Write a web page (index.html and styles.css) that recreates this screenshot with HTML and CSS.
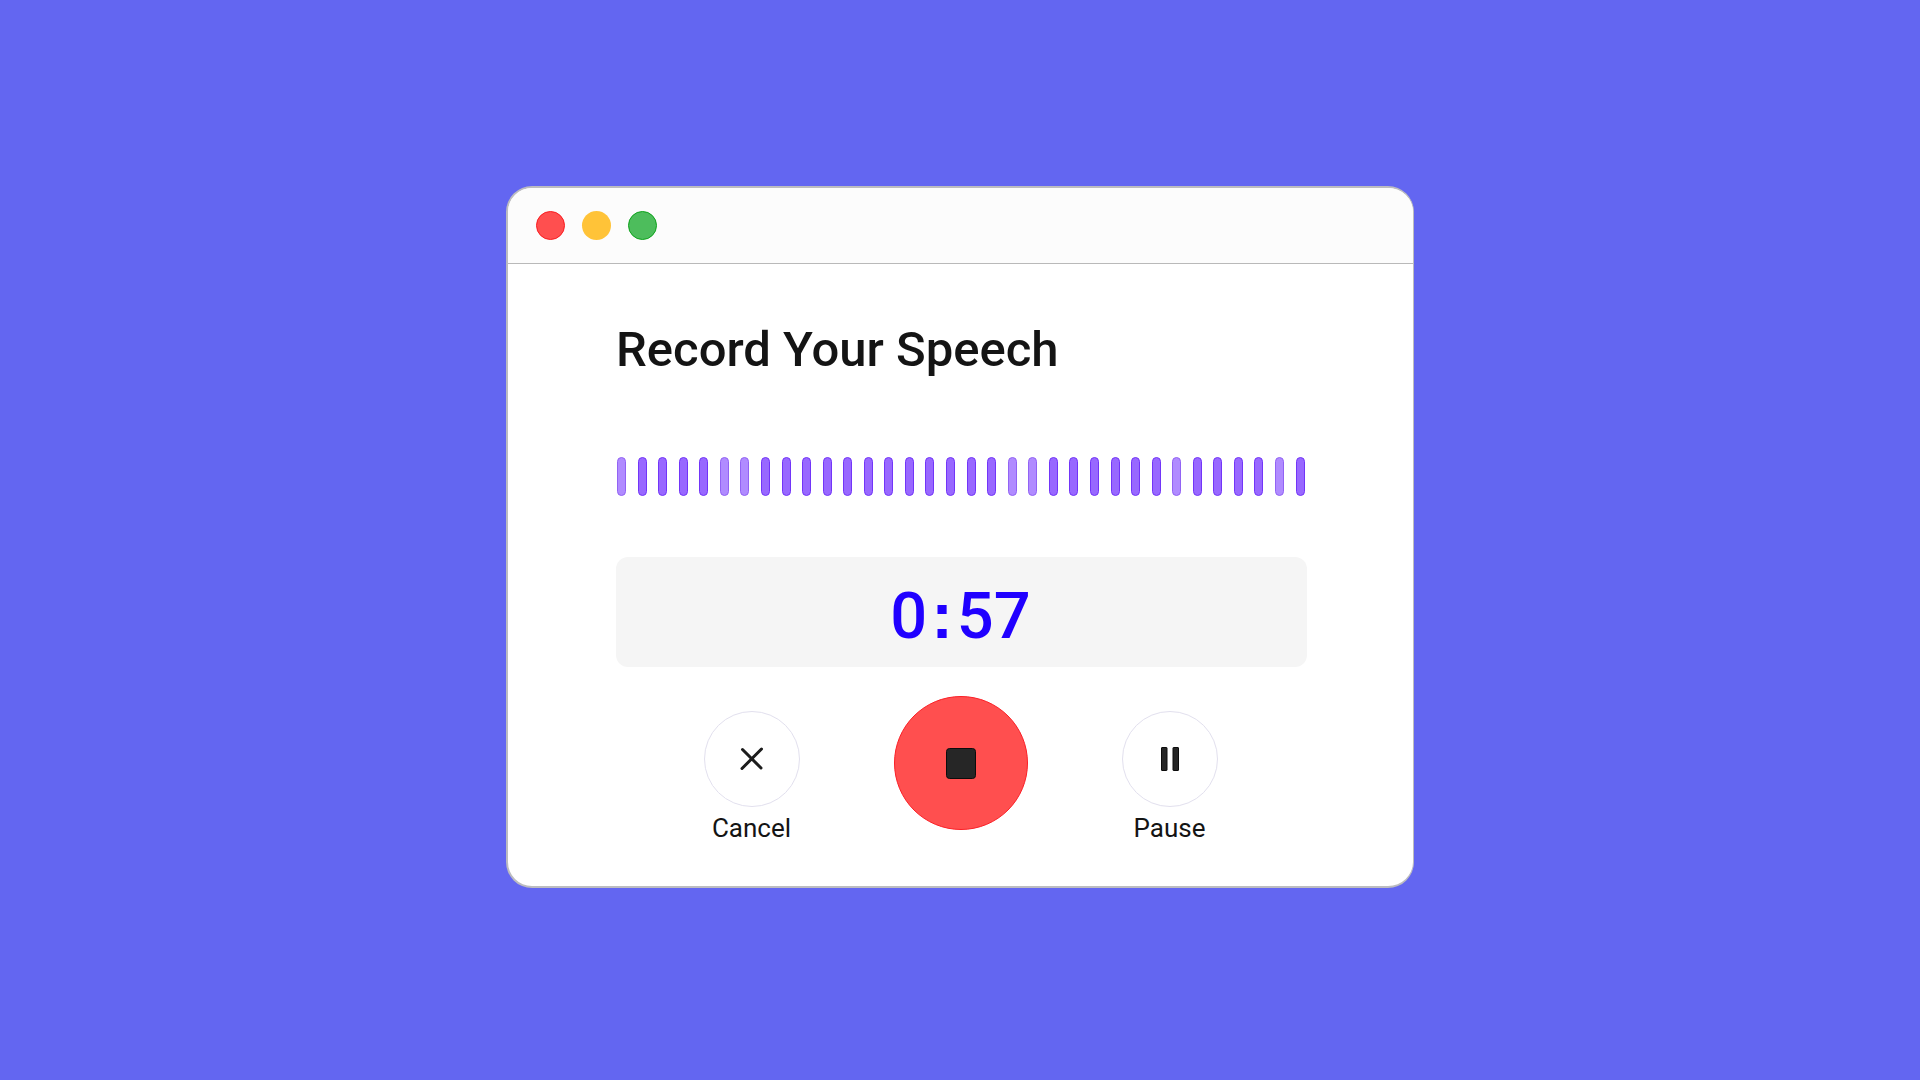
FILE: index.html
```html
<!DOCTYPE html>
<html lang="en">
<head>
<meta charset="utf-8">
<meta name="viewport" content="width=device-width, initial-scale=1">
<title>Record Your Speech</title>
<link rel="stylesheet" href="styles.css">
</head>
<body>
<main class="window">
  <header class="titlebar">
    <button class="dot dot-close" type="button" aria-label="Close"></button>
    <button class="dot dot-minimize" type="button" aria-label="Minimize"></button>
    <button class="dot dot-zoom" type="button" aria-label="Zoom"></button>
  </header>
  <section class="recorder">
    <h1 class="title">Record Your Speech</h1>
    <div class="levels" aria-hidden="true">
      <i class="bar soft"></i><i class="bar"></i><i class="bar"></i><i class="bar"></i><i class="bar"></i><i class="bar soft"></i><i class="bar soft"></i><i class="bar"></i><i class="bar"></i><i class="bar"></i><i class="bar"></i><i class="bar"></i><i class="bar"></i><i class="bar"></i><i class="bar"></i><i class="bar"></i><i class="bar"></i>
      <i class="bar"></i><i class="bar"></i><i class="bar soft"></i><i class="bar soft"></i><i class="bar"></i><i class="bar"></i><i class="bar"></i><i class="bar"></i><i class="bar"></i><i class="bar"></i><i class="bar soft"></i><i class="bar"></i><i class="bar"></i><i class="bar"></i><i class="bar"></i><i class="bar soft"></i><i class="bar"></i>
    </div>
    <div class="timer" role="timer">0<span class="colon">:</span>57</div>
    <div class="controls">
      <div class="control">
        <button class="round" id="cancel" type="button" aria-labelledby="cancel-label">
          <svg width="24" height="24" viewBox="0 0 24 24" fill="none" stroke="#1c1c1c" stroke-width="3" stroke-linecap="round"><path d="M2.5 2.5 21 21M21.5 2 2 21.5"/></svg>
        </button>
        <label class="label" id="cancel-label" for="cancel">Cancel</label>
      </div>
      <button class="stop" type="button" aria-label="Stop">
        <svg width="30" height="31" viewBox="0 0 30 31"><rect x=".5" y=".5" width="29" height="30" rx="3" fill="#262626" stroke="#0c0c0c"/></svg>
      </button>
      <div class="control">
        <button class="round" id="pause" type="button" aria-labelledby="pause-label">
          <svg width="18" height="24" viewBox="0 0 18 24" fill="#262626" stroke="#0c0c0c"><rect x=".5" y=".5" width="5.5" height="23" rx=".5"/><rect x="12" y=".5" width="5.5" height="23" rx=".5"/></svg>
        </button>
        <label class="label" id="pause-label" for="pause">Pause</label>
      </div>
    </div>
  </section>
</main>
</body>
</html>
```
FILE: styles.css
```css
* { box-sizing: border-box; }

body {
  margin: 0;
  min-height: 100vh;
  padding: 24px 24px 30px;
  display: grid;
  place-items: center;
  background: #6366f1;
  color: #141414;
  font-family: Roboto, "Liberation Sans", sans-serif;
}

button {
  padding: 0;
  border: 0;
  display: grid;
  place-items: center;
  border-radius: 50%;
}

.window {
  width: 100%;
  max-width: 908px;
  overflow: hidden;
  border: 2px solid #bcbcc0;
  border-right-width: 1px;
  border-radius: 26px;
  background: #fff;
}

.titlebar {
  display: flex;
  gap: 17px;
  padding: 23px 28px;
  border-bottom: 1px solid #b9b9b9;
  background: #fcfcfc;
}

.dot { width: 29px; height: 29px; }
.dot-close { background: #ff4f4f; border: 1px solid #f91c20; }
.dot-minimize { background: #ffc338; }
.dot-zoom { background: #4dbd5c; border: 1px solid #0ea31c; }

.recorder { padding: 56px 106px 41px 108px; }

.title {
  margin: 0;
  font-size: 49px;
  line-height: 60px;
  font-weight: 500;
}

.levels {
  display: flex;
  justify-content: space-between;
  margin: 77px 2px 61px 1px;
}

.bar {
  width: 9px;
  height: 39px;
  border: 1px solid #7235f8;
  border-radius: 5px;
  background: #9868ff;
}

.soft { background: #b08bff; border-color: #9263f4; }

.timer {
  display: flex;
  justify-content: center;
  align-items: baseline;
  padding: 8px 2px 0 0;
  border-radius: 12px;
  background: #f5f5f5;
  color: #2000ff;
  font-size: 65px;
  font-weight: 500;
  line-height: 102px;
}

.colon {
  padding: 0 4px;
  font-family: "Liberation Sans", sans-serif;
  font-weight: 700;
}

.controls {
  display: flex;
  justify-content: center;
  align-items: flex-start;
  gap: 94px;
  margin: 29px 2px 0 0;
}

.control {
  width: 96px;
  padding-top: 15px;
  display: flex;
  flex-direction: column;
  align-items: center;
}

.round {
  width: 96px;
  height: 96px;
  border: 1px solid #e2e0ee;
  background: #fff;
}

.label {
  margin-top: 4px;
  font-size: 26px;
  line-height: 34px;
}

.stop {
  width: 134px;
  height: 134px;
  border: 1px solid #fb1f26;
  background: #ff4f4f;
}
```
